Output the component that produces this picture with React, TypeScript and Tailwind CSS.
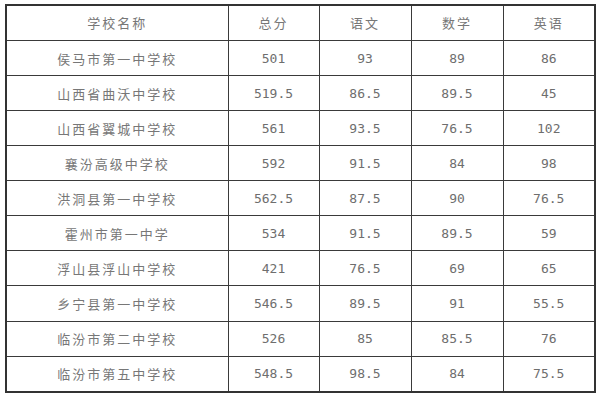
import React from 'react';

type Row = [string, string, string, string, string];

const header: Row = ['学校名称', '总分', '语文', '数学', '英语'];

const rows: Row[] = [
  ['侯马市第一中学校', '501', '93', '89', '86'],
  ['山西省曲沃中学校', '519.5', '86.5', '89.5', '45'],
  ['山西省翼城中学校', '561', '93.5', '76.5', '102'],
  ['襄汾高级中学校', '592', '91.5', '84', '98'],
  ['洪洞县第一中学校', '562.5', '87.5', '90', '76.5'],
  ['霍州市第一中学', '534', '91.5', '89.5', '59'],
  ['浮山县浮山中学校', '421', '76.5', '69', '65'],
  ['乡宁县第一中学校', '546.5', '89.5', '91', '55.5'],
  ['临汾市第二中学校', '526', '85', '85.5', '76'],
  ['临汾市第五中学校', '548.5', '98.5', '84', '75.5'],
];

// spaced-out CJK text, light grey like the Song face in the original
const cjk = "font-['Noto_Sans_CJK_SC',sans-serif] text-[13px] tracking-[2px] text-[#777]";
const num = "font-['DejaVu_Sans_Mono','Liberation_Mono',monospace] text-[13px] text-[#6e6e6e]";

const App: React.FC = () => {
  return (
    <div className="w-[599px] h-[400px] bg-white pl-[5px] pt-[4px]">
      <table className="table-fixed border-collapse w-[589px] h-[389px] border-2 border-[#333]">
        <colgroup>
          <col className="w-[222px]" />
          <col className="w-[91px]" />
          <col className="w-[92px]" />
          <col className="w-[92px]" />
          <col className="w-[92px]" />
        </colgroup>
        <tbody>
          {/* Header row */}
          <tr>
            {header.map((h, i) => (
              <td key={i} className={`border border-[#3a3a3a] text-center align-middle ${cjk}`}>
                {h}
              </td>
            ))}
          </tr>
          {rows.map((r, ri) => (
            <tr key={ri}>
              {r.map((cell, ci) => (
                <td
                  key={ci}
                  className={`border border-[#3a3a3a] text-center align-middle ${ci === 0 ? cjk : num}`}
                >
                  {cell}
                </td>
              ))}
            </tr>
          ))}
        </tbody>
      </table>
    </div>
  );
};

export default App;
